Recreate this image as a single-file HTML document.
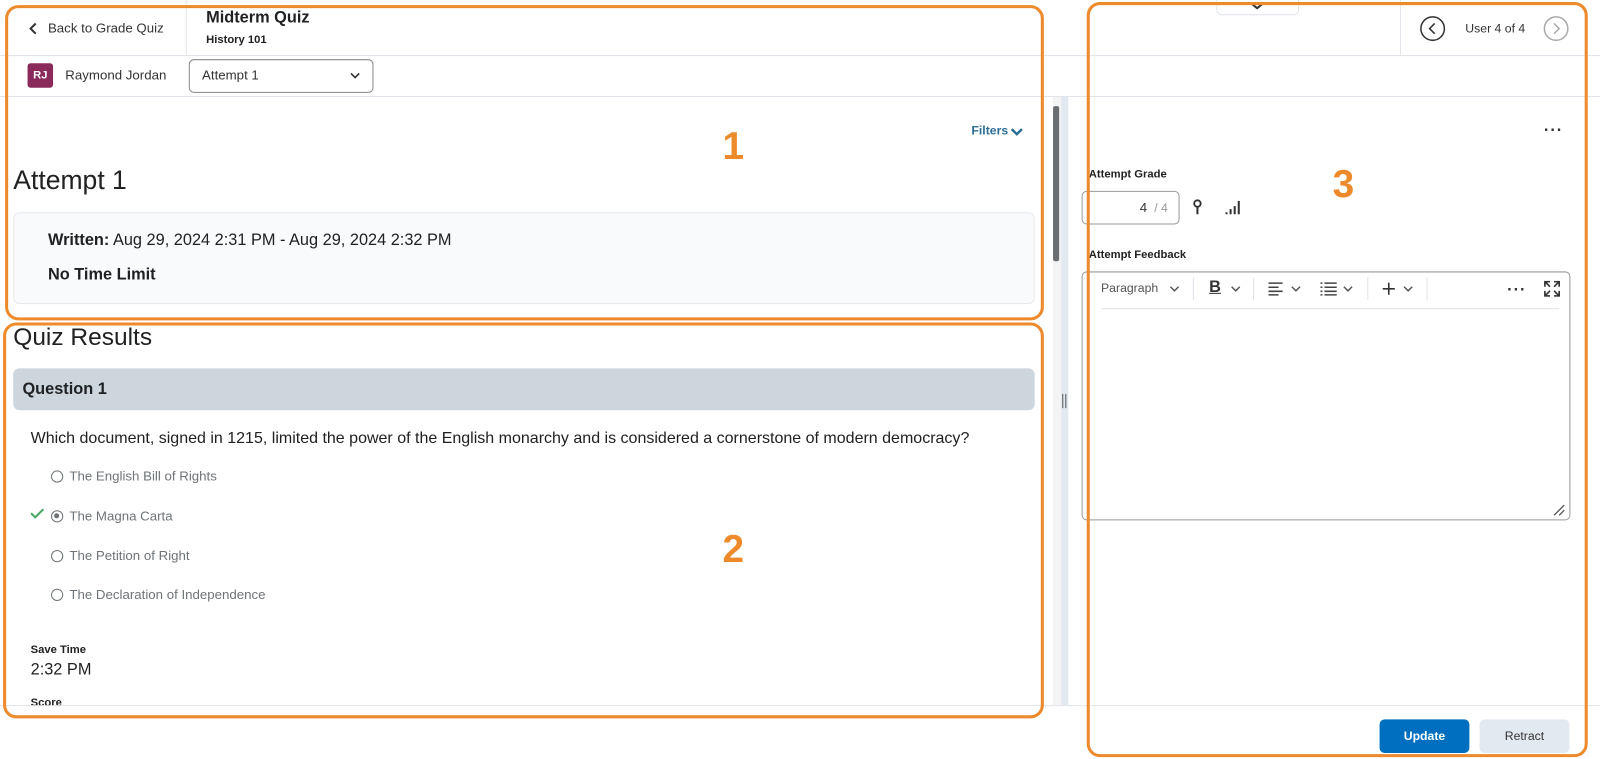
<!DOCTYPE html>
<html><head><meta charset="utf-8"><style>
*{box-sizing:border-box;margin:0;padding:0}
body{width:1600px;height:759px;position:relative;overflow:hidden;background:#fff;font-family:"Liberation Sans",sans-serif;color:#202122}
#w{position:absolute;left:0;top:0;width:1568px;height:744px;transform:scale(1.0204);transform-origin:0 0}
.a{position:absolute;white-space:nowrap}
.hl{position:absolute;height:1px;background:#dfe3e8}
.ob{position:absolute;border:3px solid #ec8a2c;border-radius:13px}
.num{position:absolute;color:#ec8a2c;font-weight:bold;font-size:38px}
.opt{position:absolute;left:50px;font-size:13px;color:#6e7477}
.opt i{display:inline-block;width:12px;height:12px;border:1.5px solid #6e7477;border-radius:50%;vertical-align:-2px;margin-right:6px;position:relative}
.lbl{font-size:11px;font-weight:bold}
</style></head><body><div id="w">
<div class="hl" style="left:0;top:54px;width:1568px"></div>
<div class="hl" style="left:0;top:94px;width:1568px"></div>
<div class="hl" style="left:0;top:691px;width:1568px"></div>
<div style="position:absolute;left:182px;top:0;width:1px;height:54px;background:#e3e6ea"></div>
<div style="position:absolute;left:1372px;top:0;width:1px;height:54px;background:#e3e6ea"></div>
<svg class="a" style="left:28px;top:22px" width="10" height="12"><path d="M7 1L2 6l5 5" stroke="#333" stroke-width="2" fill="none"/></svg>
<div class="a" style="left:47px;top:20px;font-size:13px;color:#333">Back to Grade Quiz</div>
<div class="a" style="left:202px;top:9px;font-size:16px;font-weight:bold">Midterm Quiz</div>
<div class="a" style="left:202px;top:33px;font-size:11px;font-weight:bold">History 101</div>
<div class="a" style="left:27px;top:62px;width:25px;height:24px;background:#8a2a5a;border-radius:3px;color:#fff;font-size:11px;font-weight:bold;text-align:center;line-height:24px">RJ</div>
<div class="a" style="left:64px;top:66px;font-size:13px;color:#333">Raymond Jordan</div>
<div class="a" style="left:185px;top:58px;width:181px;height:33px;border:1px solid #888;border-radius:5px"></div>
<div class="a" style="left:198px;top:66px;font-size:13px;color:#333">Attempt 1</div>
<svg class="a" style="left:343px;top:71px" width="10" height="7"><path d="M1 1l4 4 4-4" stroke="#333" stroke-width="1.6" fill="none"/></svg>
<div class="a" style="left:952px;top:121px;font-size:12px;font-weight:bold;color:#2a6d95">Filters</div>
<svg class="a" style="left:990px;top:125px" width="13" height="9"><path d="M1.5 1.5l5 5 5-5" stroke="#2a6d95" stroke-width="2.4" fill="none"/></svg>
<div class="a" style="left:1032px;top:95px;width:8px;height:596px;background:#f4f4f4"></div>
<div class="a" style="left:1032px;top:104px;width:6px;height:152px;background:#6b6e71;border-radius:2px"></div>
<div class="a" style="left:1040px;top:95px;width:7px;height:596px;background:#e3e9f1"></div>
<div class="a" style="left:1041px;top:386px;width:4px;height:14px;border-left:1px solid #555;border-right:1px solid #555"></div>
<div class="a" style="left:13px;top:161px;font-size:26px">Attempt 1</div>
<div class="a" style="left:13px;top:208px;width:1001px;height:90px;background:#f9fafb;border:1px solid #e6e9ed;border-radius:6px"></div>
<div class="a" style="left:47px;top:227px;font-size:16px"><b>Written:</b> Aug 29, 2024 2:31 PM - Aug 29, 2024 2:32 PM</div>
<div class="a" style="left:47px;top:261px;font-size:16px;font-weight:bold">No Time Limit</div>
<div class="a" style="left:13px;top:317px;font-size:24px">Quiz Results</div>
<div class="a" style="left:13px;top:361px;width:1001px;height:41px;background:#cdd5dd;border-radius:6px"></div>
<div class="a" style="left:22px;top:373px;font-size:16px;font-weight:bold">Question 1</div>
<div class="a" style="left:30px;top:421px;font-size:15.7px">Which document, signed in 1215, limited the power of the English monarchy and is considered a cornerstone of modern democracy?</div>
<div class="opt" style="top:459px"><i></i>The English Bill of Rights</div>
<svg class="a" style="left:29px;top:497px" width="15" height="12"><path d="M1.5 6l4 4 8-8" stroke="#46a661" stroke-width="2" fill="none"/></svg>
<div class="opt" style="top:498px"><i><span style="position:absolute;left:2px;top:2px;width:5px;height:5px;border-radius:50%;background:#6e7477"></span></i>The Magna Carta</div>
<div class="opt" style="top:537px"><i></i>The Petition of Right</div>
<div class="opt" style="top:575px"><i></i>The Declaration of Independence</div>
<div class="a lbl" style="left:30px;top:631px">Save Time</div>
<div class="a" style="left:30px;top:648px;font-size:16px">2:32 PM</div>
<div class="a lbl" style="left:30px;top:683px;height:8px;overflow:hidden">Score</div>
<div class="a" style="left:1192px;top:-2px;width:81px;height:17px;border:1px solid #dfe3e8;border-radius:0 0 5px 5px"></div>
<svg class="a" style="left:1226px;top:3px" width="12" height="7"><path d="M1 1l5 4 5-4" stroke="#333" stroke-width="2" fill="none"/></svg>
<svg class="a" style="left:1391px;top:15px" width="26" height="26"><circle cx="13" cy="13" r="11.5" stroke="#333" stroke-width="1.5" fill="none"/><path d="M15 8l-5 5 5 5" stroke="#333" stroke-width="1.5" fill="none"/></svg>
<div class="a" style="left:1436px;top:21px;font-size:12px;color:#333">User 4 of 4</div>
<svg class="a" style="left:1512px;top:15px" width="26" height="26"><circle cx="13" cy="13" r="11.5" stroke="#aaa" stroke-width="1.5" fill="none"/><path d="M11 8l5 5-5 5" stroke="#aaa" stroke-width="1.5" fill="none"/></svg>
<div class="a" style="left:1513px;top:120px;font-size:16px;font-weight:bold;letter-spacing:1px;color:#333">···</div>
<div class="a lbl" style="left:1067px;top:165px">Attempt Grade</div>
<div class="a" style="left:1060px;top:187px;width:96px;height:33px;border:1px solid #999;border-radius:5px"></div>
<div class="a" style="left:1117px;top:196px;font-size:13px;color:#333">4 <span style="color:#999;font-size:12px">&nbsp;/ 4</span></div>
<svg class="a" style="left:1168px;top:195px" width="12" height="16"><circle cx="5.5" cy="4.5" r="3.2" stroke="#333" stroke-width="1.8" fill="none"/><path d="M5.5 8v7" stroke="#333" stroke-width="2"/></svg>
<svg class="a" style="left:1200px;top:195px" width="17" height="16"><path d="M2 15v-2M6 15v-5M10 15v-8M14 15v-13" stroke="#333" stroke-width="2"/></svg>
<div class="a lbl" style="left:1067px;top:244px">Attempt Feedback</div>
<div class="a" style="left:1060px;top:266px;width:479px;height:244px;border:1px solid #999;border-radius:5px"></div>
<div class="a" style="left:1080px;top:302px;width:448px;height:1px;background:#dfe3e8"></div>
<div class="a" style="left:1079px;top:275px;font-size:12px;color:#555">Paragraph</div>
<svg class="a" style="left:1146px;top:280px" width="10" height="7"><path d="M1 1l4 4 4-4" stroke="#555" stroke-width="1.4" fill="none"/></svg>
<div class="a" style="left:1169px;top:272px;width:1px;height:22px;background:#dfe3e8"></div>
<div class="a" style="left:1185px;top:273px;font-size:16px;font-weight:bold;color:#333;text-decoration:underline">B</div>
<svg class="a" style="left:1206px;top:280px" width="10" height="7"><path d="M1 1l4 4 4-4" stroke="#555" stroke-width="1.4" fill="none"/></svg>
<div class="a" style="left:1228px;top:272px;width:1px;height:22px;background:#dfe3e8"></div>
<svg class="a" style="left:1243px;top:276px" width="16" height="14"><path d="M0 1.5h14M0 5.5h10M0 9.5h14M0 13h10" stroke="#444" stroke-width="1.5"/></svg>
<svg class="a" style="left:1265px;top:280px" width="10" height="7"><path d="M1 1l4 4 4-4" stroke="#555" stroke-width="1.4" fill="none"/></svg>
<svg class="a" style="left:1294px;top:276px" width="17" height="14"><path d="M0 1.5h2M0 5.5h2M0 9.5h2M0 13h2M4 1.5h12M4 5.5h12M4 9.5h12M4 13h12" stroke="#444" stroke-width="1.5"/></svg>
<svg class="a" style="left:1316px;top:280px" width="10" height="7"><path d="M1 1l4 4 4-4" stroke="#555" stroke-width="1.4" fill="none"/></svg>
<div class="a" style="left:1340px;top:272px;width:1px;height:22px;background:#dfe3e8"></div>
<svg class="a" style="left:1355px;top:277px" width="12" height="12"><path d="M6 0v12M0 6h12" stroke="#333" stroke-width="1.6"/></svg>
<svg class="a" style="left:1375px;top:280px" width="10" height="7"><path d="M1 1l4 4 4-4" stroke="#555" stroke-width="1.4" fill="none"/></svg>
<div class="a" style="left:1398px;top:272px;width:1px;height:22px;background:#dfe3e8"></div>
<div class="a" style="left:1477px;top:276px;font-size:16px;font-weight:bold;letter-spacing:1px;color:#333">···</div>
<svg class="a" style="left:1513px;top:275px" width="16" height="16"><path d="M1 6V1h5M10 1h5v5M15 10v5h-5M6 15H1v-5M1 1l5 5M15 1l-5 5M15 15l-5-5M1 15l5-5" stroke="#333" stroke-width="1.6" fill="none"/></svg>
<svg class="a" style="left:1521px;top:493px" width="14" height="14"><path d="M2 12L12 2M7 12l5-5" stroke="#555" stroke-width="1.3"/></svg>
<div class="a" style="left:1352px;top:705px;width:88px;height:33px;background:#006fbf;border-radius:5px;color:#fff;font-size:12px;font-weight:bold;text-align:center;line-height:33px">Update</div>
<div class="a" style="left:1450px;top:705px;width:88px;height:33px;background:#e3e9f1;border-radius:5px;color:#333;font-size:12px;text-align:center;line-height:33px">Retract</div>
<div class="ob" style="left:5px;top:5px;width:1018px;height:309px"></div>
<div class="ob" style="left:3px;top:316px;width:1020px;height:388px"></div>
<div class="ob" style="left:1065px;top:2px;width:491px;height:740px"></div>
<div class="num" style="left:708px;top:123px">1</div>
<div class="num" style="left:708px;top:518px">2</div>
<div class="num" style="left:1306px;top:160px">3</div>
</div></body></html>
